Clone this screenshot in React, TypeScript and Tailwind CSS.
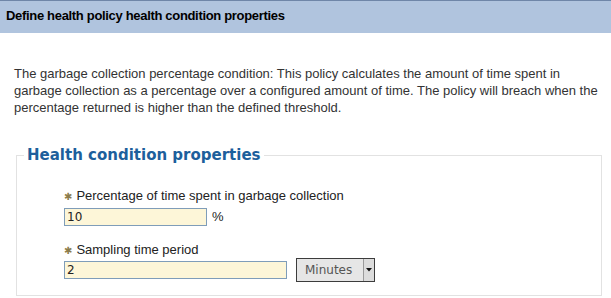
import React from "react";

function Star() {
  return (
    <span className="mr-[4px] inline-block text-[10px] leading-none text-[#8c7d4c]" style={{ fontFamily: '"DejaVu Sans", sans-serif' }}>
      ✱
    </span>
  );
}

export default function App() {
  return (
    <div className="w-[611px] h-[298px] overflow-hidden bg-white font-['Liberation_Sans',Arial,sans-serif]">
      <div className="h-[33px] border-t border-[#6f86a8] bg-[#b0c4de] pl-[6px] pt-[7px] text-[13px] font-bold leading-[16px] tracking-[-0.32px] text-[#000]">
        Define health policy health condition properties
      </div>
      <p className="mt-[32px] pl-[14px] pr-[8px] text-[13px] leading-[17px] text-[#333]">
        The garbage collection percentage condition: This policy calculates the amount of time spent in garbage collection as a percentage over a configured amount of time. The policy will breach when the percentage returned is higher than the defined threshold.
      </p>
      <fieldset className="ml-[16px] mt-[30px] w-[586px] h-[150px] border border-[#e2e2e2]">
        <legend className="ml-[7px] px-[3px] text-[15px] font-bold leading-[18px] text-[#1d5f9c] font-['DejaVu_Sans',sans-serif]">
          Health condition properties
        </legend>
        <div className="pl-[47px]">
          <div className="mt-[24px] text-[13px] leading-[16px] text-[#222]">
            <Star />Percentage of time spent in garbage collection
          </div>
          <div className="mt-[3px] flex items-center">
            <div className="h-[18px] w-[143px] border border-[#7f9db9] bg-[#fdf6d8] pl-[2px] text-[12px] leading-[16px] text-[#222] font-['DejaVu_Sans',sans-serif]">
              10
            </div>
            <span className="ml-[5px] text-[13px] text-[#222]">%</span>
          </div>
          <div className="mt-[15px] text-[13px] leading-[16px] text-[#222]">
            <Star />Sampling time period
          </div>
          <div className="mt-0 flex items-start">
            <div className="mt-[3px] h-[18px] w-[223px] border border-[#7f9db9] bg-[#fdf6d8] pl-[2px] text-[12px] leading-[16px] text-[#222] font-['DejaVu_Sans',sans-serif]">
              2
            </div>
            <div className="ml-[9px] flex h-[24px] w-[79px] border border-[#3c3c3c] bg-[#e6e6e6]">
              <div className="flex-1 pl-[8px] text-[12px] leading-[22px] text-[#555] font-['DejaVu_Sans',sans-serif]">Minutes</div>
              <div className="flex w-[11px] items-center justify-center border-l border-[#9a9a9a] bg-[#dcdcdc]">
                <svg width="6" height="4" viewBox="0 0 6 4"><path d="M0 0H6L3 3.5Z" fill="#111" /></svg>
              </div>
            </div>
          </div>
        </div>
      </fieldset>
    </div>
  );
}
